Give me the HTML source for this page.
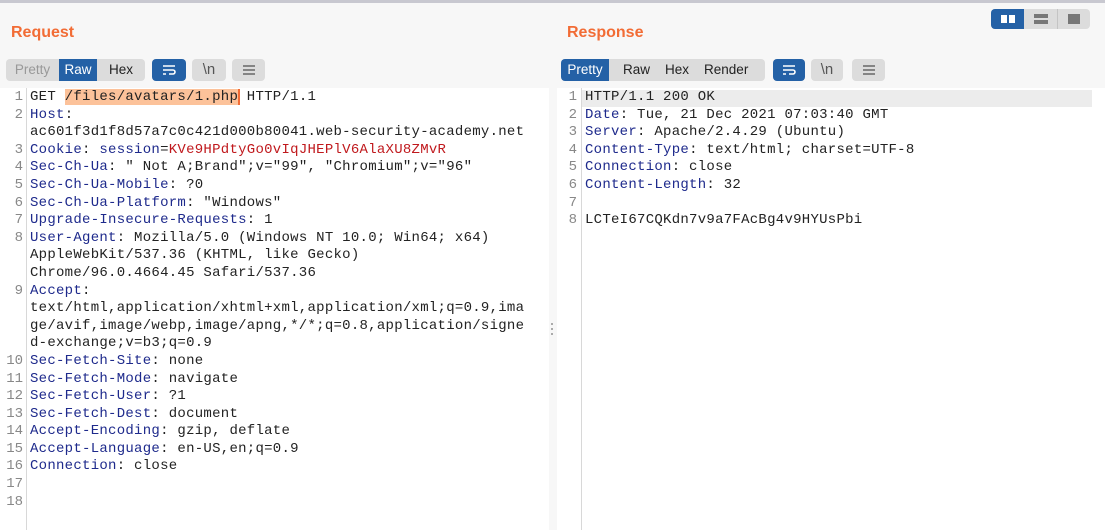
<!DOCTYPE html>
<html><head><meta charset="utf-8"><style>
*{margin:0;padding:0;box-sizing:border-box}
body{width:1105px;height:530px;overflow:hidden;background:#f7f7f7;font-family:"Liberation Sans",sans-serif;position:relative}
.topline{position:absolute;left:0;top:0;width:1105px;height:3px;background:#c8c8d0}
.title{position:absolute;top:24px;font-size:16px;font-weight:bold;color:#f26c35}
.btn{position:absolute;top:59px;height:22px;font-size:13.5px;line-height:22px;text-align:center;color:#222}
.g{background:#dcdcdc}.b{background:#2461a6;color:#fff}
.ed{position:absolute;top:88px;bottom:0;background:#fff}
.gut{position:absolute;top:88px;bottom:0;width:1px;background:#d8d8d8}
.code{position:absolute;top:89px;font-family:"Liberation Mono",monospace;font-size:14px;letter-spacing:0.27px;line-height:17.6px;white-space:pre;color:#222}
.num{position:absolute;top:89px;font-family:"Liberation Mono",monospace;font-size:14px;line-height:17.6px;white-space:pre;color:#888;text-align:right}
.k{color:#1e2a8c}.r{color:#c0191d}
.hl{background:#fcc29a;box-shadow:2px 0 0 #f26c35}
</style></head><body>
<div class="topline"></div>
<div class="title" style="left:11px">Request</div>
<div class="title" style="left:567px">Response</div>

<div class="btn g" style="left:6px;width:53px;color:#999;border-radius:4px 0 0 4px">Pretty</div>
<div class="btn b" style="left:59px;width:38px">Raw</div>
<div class="btn g" style="left:97px;width:48px;border-radius:0 4px 4px 0">Hex</div>
<div class="btn b" style="left:152px;width:34px;border-radius:4px"><svg width="16" height="12" viewBox="0 0 16 12" style="margin-top:5px"><path d="M2 2h12M2 6h10a2 2 0 0 1 0 4H8M2 10h3" stroke="#fff" stroke-width="1.6" fill="none"/></svg></div>
<div class="btn g" style="left:192px;width:34px;border-radius:4px;color:#555;font-size:15px">\n</div>
<div class="btn g" style="left:232px;width:33px;border-radius:4px"><svg width="14" height="12" viewBox="0 0 14 12" style="margin-top:5px"><path d="M1 2h12M1 6h12M1 10h12" stroke="#666" stroke-width="1.5"/></svg></div>

<div class="btn b" style="left:561px;width:48px;border-radius:4px 0 0 4px">Pretty</div>
<div class="btn g" style="left:609px;width:156px;border-radius:0 4px 4px 0;text-align:left"><span style="margin-left:14px">Raw</span><span style="margin-left:15px">Hex</span><span style="margin-left:15px">Render</span></div>
<div class="btn b" style="left:773px;width:32px;border-radius:4px"><svg width="16" height="12" viewBox="0 0 16 12" style="margin-top:5px"><path d="M2 2h12M2 6h10a2 2 0 0 1 0 4H8M2 10h3" stroke="#fff" stroke-width="1.6" fill="none"/></svg></div>
<div class="btn g" style="left:811px;width:32px;border-radius:4px;color:#555;font-size:15px">\n</div>
<div class="btn g" style="left:852px;width:33px;border-radius:4px"><svg width="14" height="12" viewBox="0 0 14 12" style="margin-top:5px"><path d="M1 2h12M1 6h12M1 10h12" stroke="#666" stroke-width="1.5"/></svg></div>

<div style="position:absolute;left:991px;top:9px;width:99px;height:20px;background:#dcdcdc;border-radius:4px"></div>
<div style="position:absolute;left:991px;top:9px;width:33px;height:20px;background:#2461a6;border-radius:4px 0 0 4px"></div>
<div style="position:absolute;left:1001px;top:15px;width:6px;height:8px;background:#fff"></div>
<div style="position:absolute;left:1009px;top:15px;width:6px;height:8px;background:#fff"></div>
<div style="position:absolute;left:1057px;top:9px;width:1px;height:20px;background:#c4c4c4"></div>
<div style="position:absolute;left:1034px;top:14px;width:14px;height:4px;background:#777"></div>
<div style="position:absolute;left:1034px;top:20px;width:14px;height:4px;background:#777"></div>
<div style="position:absolute;left:1068px;top:14px;width:12px;height:10px;background:#777"></div>

<div class="ed" style="left:0;width:549px"></div>
<div class="ed" style="left:557px;width:548px"></div>
<div class="gut" style="left:26px"></div>
<div class="gut" style="left:581px"></div>
<div style="position:absolute;left:551px;top:323px;width:2px;height:2px;background:#aaa;box-shadow:0 5px 0 #aaa,0 10px 0 #aaa"></div>
<div style="position:absolute;left:582px;top:90px;width:510px;height:17px;background:#ececec"></div>

<div class="num" style="left:0;width:23px">1
2

3
4
5
6
7
8


9



10
11
12
13
14
15
16
17
18</div>
<div class="code" style="left:30px">GET <span class="hl">/files/avatars/1.php</span> HTTP/1.1
<span class="k">Host</span>:
ac601f3d1f8d57a7c0c421d000b80041.web-security-academy.net
<span class="k">Cookie</span>: <span class="k">session</span>=<span class="r">KVe9HPdtyGo0vIqJHEPlV6AlaXU8ZMvR</span>
<span class="k">Sec-Ch-Ua</span>: " Not A;Brand";v="99", "Chromium";v="96"
<span class="k">Sec-Ch-Ua-Mobile</span>: ?0
<span class="k">Sec-Ch-Ua-Platform</span>: "Windows"
<span class="k">Upgrade-Insecure-Requests</span>: 1
<span class="k">User-Agent</span>: Mozilla/5.0 (Windows NT 10.0; Win64; x64)
AppleWebKit/537.36 (KHTML, like Gecko)
Chrome/96.0.4664.45 Safari/537.36
<span class="k">Accept</span>:
text/html,application/xhtml+xml,application/xml;q=0.9,ima
ge/avif,image/webp,image/apng,*/*;q=0.8,application/signe
d-exchange;v=b3;q=0.9
<span class="k">Sec-Fetch-Site</span>: none
<span class="k">Sec-Fetch-Mode</span>: navigate
<span class="k">Sec-Fetch-User</span>: ?1
<span class="k">Sec-Fetch-Dest</span>: document
<span class="k">Accept-Encoding</span>: gzip, deflate
<span class="k">Accept-Language</span>: en-US,en;q=0.9
<span class="k">Connection</span>: close</div>

<div class="num" style="left:557px;width:20px">1
2
3
4
5
6
7
8</div>
<div class="code" style="left:585px">HTTP/1.1 200 OK
<span class="k">Date</span>: Tue, 21 Dec 2021 07:03:40 GMT
<span class="k">Server</span>: Apache/2.4.29 (Ubuntu)
<span class="k">Content-Type</span>: text/html; charset=UTF-8
<span class="k">Connection</span>: close
<span class="k">Content-Length</span>: 32

LCTeI67CQKdn7v9a7FAcBg4v9HYUsPbi</div>
</body></html>
